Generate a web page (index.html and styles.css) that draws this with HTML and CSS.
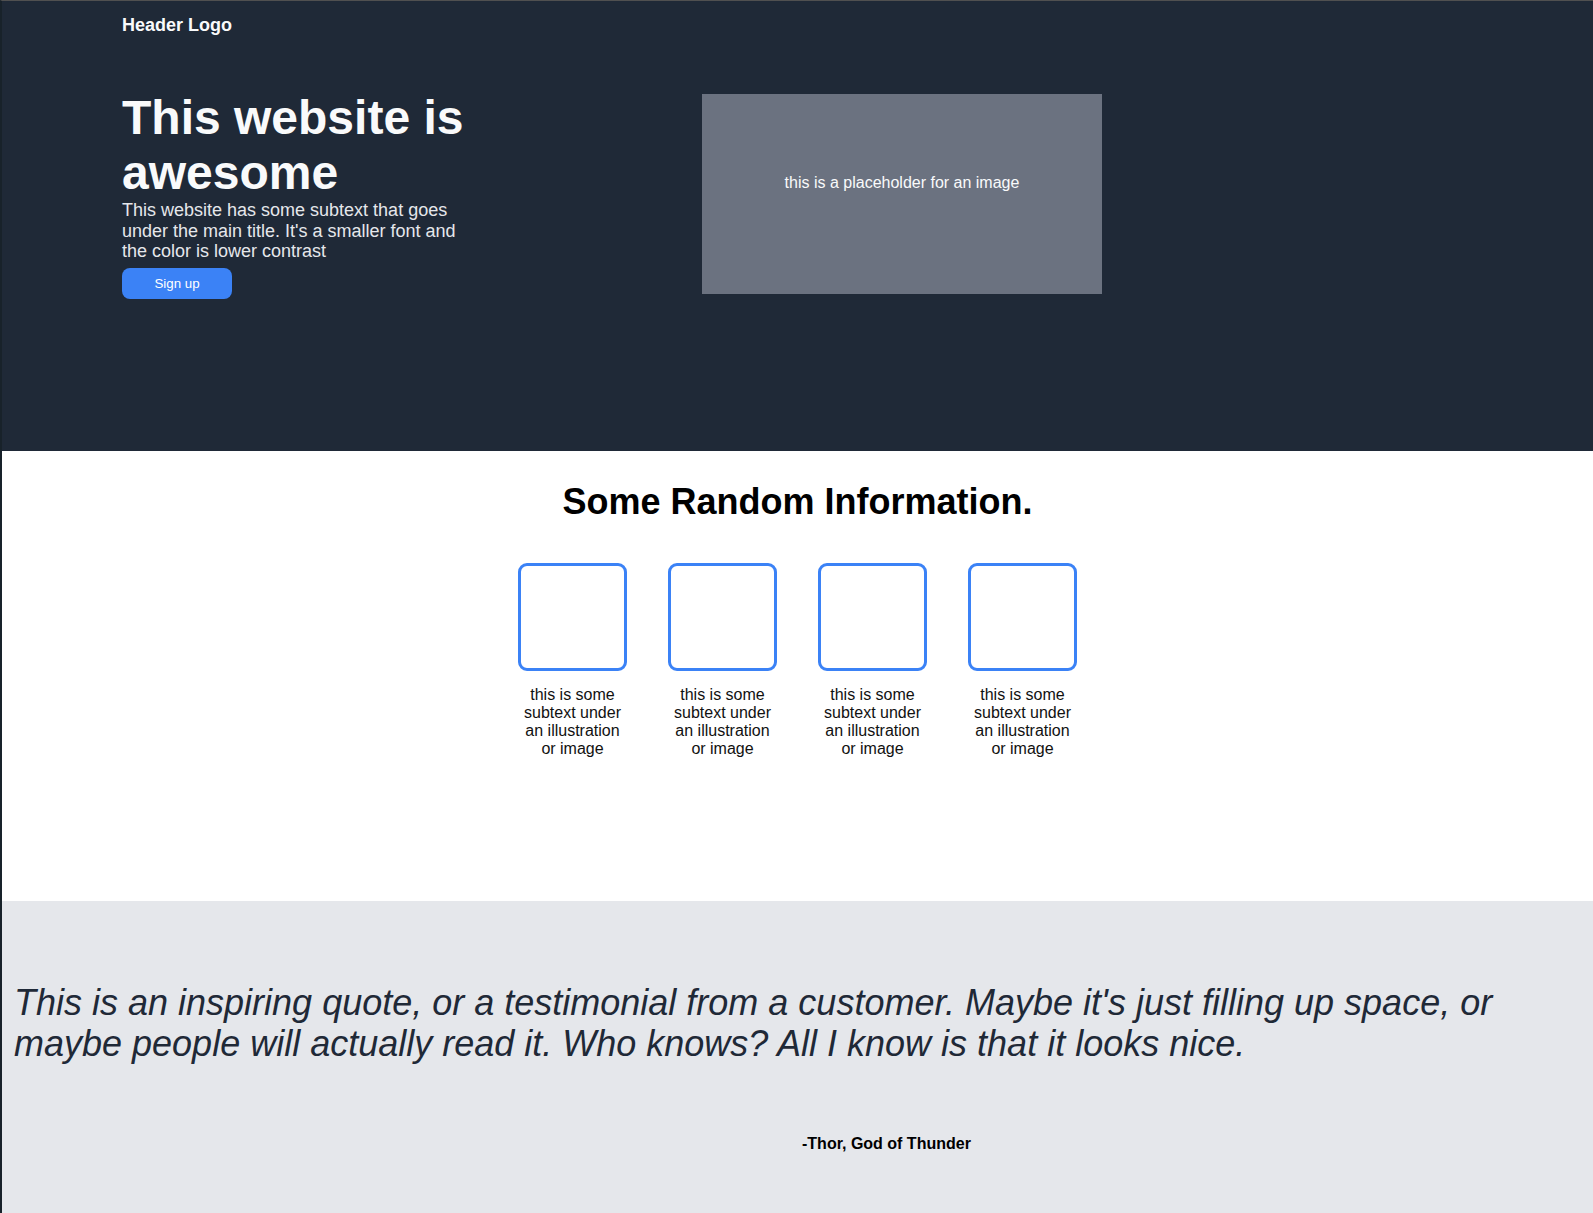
FILE: index.html
```html
<!DOCTYPE html>
<html lang="en">
<head>
<meta charset="utf-8">
<title>This website is awesome</title>
<link rel="stylesheet" href="styles.css">
</head>
<body>
<div class="frame">
  <header class="hero">
    <div class="logo">Header Logo</div>
    <div class="hero-body">
      <div class="hero-text">
        <h1 class="hero-title">This website is awesome</h1>
        <p class="hero-sub">This website has some subtext that goes under the main title. It's a smaller font and the color is lower contrast</p>
        <button class="signup">Sign up</button>
      </div>
      <div class="placeholder">this is a placeholder for an image</div>
    </div>
  </header>
  <section class="info">
    <h2 class="info-title">Some Random Information.</h2>
    <div class="cards">
      <div class="card">
        <div class="card-img"></div>
        <p class="card-text">this is some subtext under an illustration or image</p>
      </div>
      <div class="card">
        <div class="card-img"></div>
        <p class="card-text">this is some subtext under an illustration or image</p>
      </div>
      <div class="card">
        <div class="card-img"></div>
        <p class="card-text">this is some subtext under an illustration or image</p>
      </div>
      <div class="card">
        <div class="card-img"></div>
        <p class="card-text">this is some subtext under an illustration or image</p>
      </div>
    </div>
  </section>
  <section class="quote-section">
    <p class="quote">This is an inspiring quote, or a testimonial from a customer. Maybe it's just filling up space, or maybe people will actually read it. Who knows? All I know is that it looks nice.</p>
    <p class="author">-Thor, God of Thunder</p>
  </section>
</div>
</body>
</html>
```

FILE: styles.css
```css
html, body {
  margin: 0;
  padding: 0;
  background: #ffffff;
}

body {
  font-family: "Liberation Sans", Arial, sans-serif;
}

.frame {
  border-top: 1px solid #505050;
  border-left: 2px solid #18222a;
  min-height: 1212px;
  display: flex;
  flex-direction: column;
}

/* HERO */
.hero {
  background: #1f2937;
  height: 450px;
  box-sizing: border-box;
  padding: 14px 0 0 120px;
}

.logo {
  color: #f9fafb;
  font-size: 18px;
  font-weight: bold;
  line-height: 21px;
}

.hero-body {
  display: flex;
  align-items: flex-start;
  margin-top: 54px;
}

.hero-text {
  width: 350px;
}

.hero-title {
  margin: 0;
  color: #f9fafb;
  font-size: 48px;
  font-weight: bold;
  line-height: 55px;
}

.hero-sub {
  margin: 0;
  color: #e5e7eb;
  font-size: 18px;
  line-height: 20.7px;
}

.signup {
  margin-top: 6px;
  width: 110px;
  height: 31px;
  border: none;
  border-radius: 8px;
  background: #3b82f6;
  color: #ffffff;
  font-family: "Liberation Sans", Arial, sans-serif;
  font-size: 13.33px;
  padding: 0;
}

.placeholder {
  margin-left: 230px;
  margin-top: 4px;
  width: 400px;
  height: 200px;
  box-sizing: border-box;
  padding-top: 80px;
  background: #6b7280;
  color: #f9fafb;
  font-size: 16px;
  line-height: 18.4px;
  text-align: center;
}

/* INFO */
.info {
  height: 450px;
  box-sizing: border-box;
  padding-top: 30px;
  background: #ffffff;
}

.info-title {
  margin: 0;
  text-align: center;
  font-size: 36px;
  font-weight: bold;
  line-height: 41.4px;
  color: #000000;
}

.cards {
  display: flex;
  justify-content: center;
  gap: 41px;
  margin-top: 41px;
}

.card {
  width: 109px;
  display: flex;
  flex-direction: column;
  align-items: center;
}

.card-img {
  width: 103px;
  height: 102px;
  border: 3px solid #3b82f6;
  border-radius: 9px;
}

.card-text {
  margin: 15px 0 0;
  text-align: center;
  font-size: 16px;
  line-height: 18px;
  color: #111111;
}

/* QUOTE */
.quote-section {
  flex: 1;
  background: #e5e7eb;
  padding: 81px 12px 0;
}

.quote {
  margin: 0;
  font-size: 36px;
  font-style: italic;
  line-height: 41.4px;
  color: #1f2937;
}

.author {
  margin: 70px 0 0 788px;
  font-size: 16px;
  font-weight: bold;
  line-height: 18.4px;
  color: #000000;
}
```
